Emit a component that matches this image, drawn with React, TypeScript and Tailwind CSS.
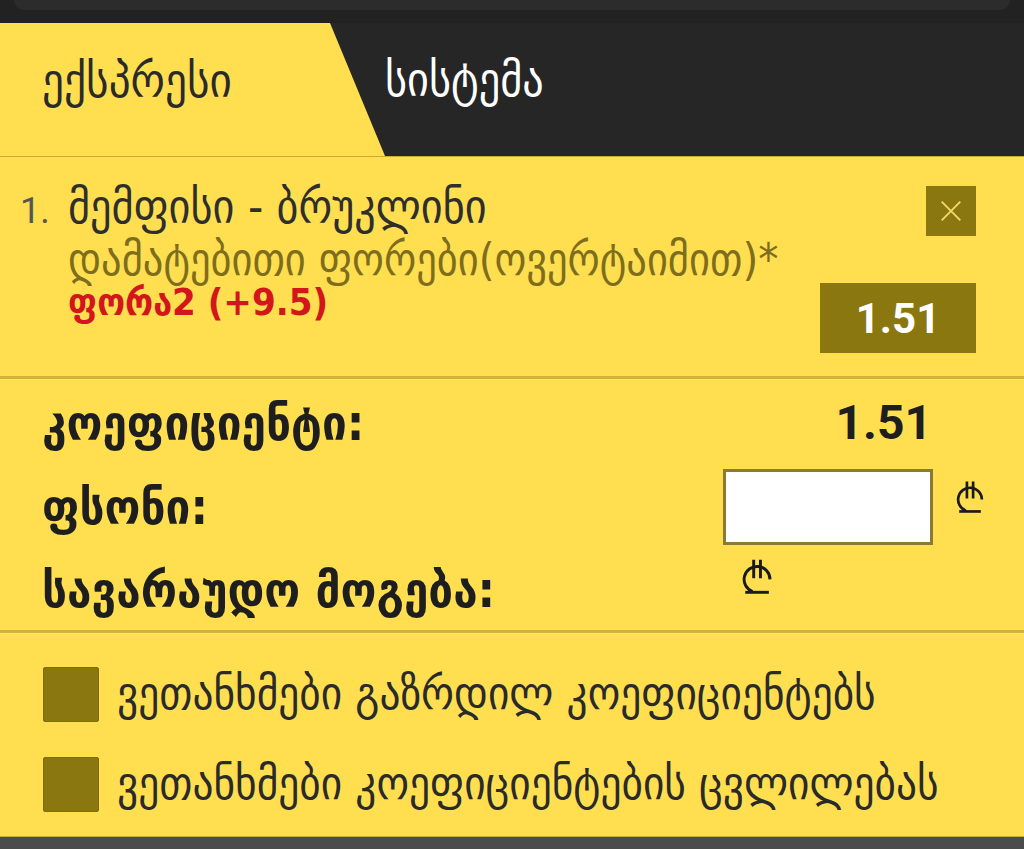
const geo = { fontFamily: '"DejaVu Sans Condensed", "DejaVu Sans", sans-serif' };
const num = { fontFamily: 'Roboto, "Liberation Sans", sans-serif' };

function Lari({ className }: { className?: string }) {
  return (
    <svg viewBox="0 0 30 32" className={className} fill="none" stroke="#1a1a1a" strokeWidth="2.6">
      <path d="M12.5 1.5v16.5M18.5 1.5v16.5" />
      <path d="M27 19A11.5 11.5 0 1 0 11.5 29.8" />
      <path d="M5 30.5h21" />
    </svg>
  );
}

function Check({ label }: { label: string }) {
  return (
    <label className="flex items-center gap-[18px]">
      <span className="w-[56px] h-[55px] shrink-0 rounded-[3px] bg-[#8b770f] shadow-[inset_0_0_0_1px_#7d6b0c]" />
      <span className="text-[46px] text-[#2a2a2a] leading-none pb-[4px]" style={geo}>{label}</span>
    </label>
  );
}

export default function App() {
  return (
    <div className="w-[1024px] h-[849px] bg-[#ffdf50] flex flex-col overflow-hidden">
      <div className="h-[23px] bg-[#222222] shrink-0">
        <div className="h-[10px] mx-[14px] rounded-b-[12px] bg-[#2c2c2c]" />
      </div>

      <div className="h-[134px] shrink-0 flex bg-[#262626] border-b border-[#c8ac33]">
        <div className="w-[385px] bg-[#ffdf50] flex items-center pl-[42px] pb-[20px] [clip-path:polygon(0_0,330px_0,385px_100%,0_100%)]">
          <span className="text-[48px] text-[#2a2a2a] leading-none" style={geo}>ექსპრესი</span>
        </div>
        <div className="flex-1 flex items-center pb-[20px]">
          <span className="text-[47px] text-white leading-none" style={geo}>სისტემა</span>
        </div>
      </div>

      <div className="h-[222px] shrink-0 flex pl-[20px] pr-[48px] pt-[26px] border-b-[3px] border-[#d0b23c]">
        <div className="flex-1 flex flex-col">
          <div className="flex items-baseline gap-[14px]">
            <span className="text-[36px] text-[#555] leading-none w-[34px]" style={num}>1.</span>
            <span className="text-[47px] text-[#2e2e2e] leading-none" style={geo}>მემფისი - ბრუკლინი</span>
          </div>
          <div className="flex flex-col pl-[48px]">
            <span className="text-[45px] text-[#7d6d1c] leading-[42px] mt-[9px]" style={geo}>დამატებითი ფორები(ოვერტაიმით)*</span>
            <span className="text-[38px] font-bold text-[#d2161c] leading-[34px] mt-[4px]" style={geo}>ფორა2 (+9.5)</span>
          </div>
        </div>
        <div className="flex flex-col items-end justify-between pb-[23px] pt-[3px]">
          <button className="w-[50px] h-[50px] bg-[#8b770f] flex items-center justify-center">
            <svg viewBox="0 0 24 24" className="w-[28px] h-[28px]" stroke="#f2d968" strokeWidth="1.6">
              <path d="M4 4l16 16M20 4L4 20" />
            </svg>
          </button>
          <div className="w-[156px] h-[70px] bg-[#8b770f] flex items-center justify-center text-white text-[42px] font-bold" style={num}>1.51</div>
        </div>
      </div>

      <div className="h-[254px] shrink-0 flex flex-col pl-[42px] pr-[39px] border-b-[3px] border-[#d0b23c] border-t border-t-[#ffe97f]">
        <div className="h-[84px] flex items-center justify-between pt-[2px]">
          <span className="text-[49px] font-bold text-[#1e1e1e] leading-none" style={geo}>კოეფიციენტი:</span>
          <span className="text-[48px] font-bold text-[#1e1e1e] mr-[53px] leading-none" style={num}>1.51</span>
        </div>
        <div className="h-[86px] flex items-center justify-between">
          <span className="text-[49px] font-bold text-[#1e1e1e] leading-none" style={geo}>ფსონი:</span>
          <div className="flex items-start gap-[21px]">
            <input className="w-[210px] h-[76px] bg-white border-[3px] border-[#8a7a33] outline-none" />
            <Lari className="w-[31px] h-[33px] mt-[11px]" />
          </div>
        </div>
        <div className="flex items-start">
          <span className="text-[49px] font-bold text-[#1e1e1e] mt-[16px] w-[697px] leading-none" style={geo}>სავარაუდო მოგება:</span>
          <Lari className="w-[35px] h-[36px] mt-[8px]" />
        </div>
      </div>

      <div className="flex flex-col pl-[43px] pt-[33px] gap-[35px] border-t border-t-[#ffe97f]">
        <Check label="ვეთანხმები გაზრდილ კოეფიციენტებს" />
        <Check label="ვეთანხმები კოეფიციენტების ცვლილებას" />
      </div>

      <div className="mt-auto h-[13px] bg-[#4b4b4b] border-t border-[#c8ac33]" />
    </div>
  );
}
